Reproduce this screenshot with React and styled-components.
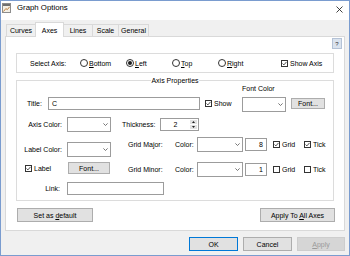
import React from "react";
import styled, { createGlobalStyle } from "styled-components";

const GlobalStyle = createGlobalStyle`
  html, body {
    margin: 0;
    padding: 0;
    background: #ffffff;
  }
  body {
    font-family: "Liberation Sans", Arial, sans-serif;
    font-size: 7px;
    color: #000;
  }
  * {
    box-sizing: border-box;
  }
  u {
    text-underline-offset: 1px;
  }
`;

const Window = styled.div`
  width: 350px;
  height: 256px;
  border: 1px solid #7a9ccf;
  background: #f0f0f0;
  display: flex;
  flex-direction: column;
  overflow: hidden;
`;

const TitleBar = styled.div`
  flex: none;
  height: 19px;
  background: #fff;
  display: flex;
  align-items: flex-start;
  padding: 2px 6px 0 1px;
`;

const TitleIcon = styled.svg`
  flex: none;
  margin-right: 6px;
`;

const TitleText = styled.span`
  font-size: 7.8px;
  line-height: 10px;
`;

const CloseIcon = styled.svg`
  flex: none;
  margin: 3px 0 0 auto;
`;

const TabStrip = styled.div`
  flex: none;
  height: 16px;
  margin: 0 4px;
  padding-left: 1px;
  display: flex;
  align-items: flex-end;
  position: relative;
  z-index: 1;
`;

const Tab = styled.div`
  width: ${(p) => p.$w}px;
  height: ${(p) => (p.$active ? 15 : 12)}px;
  margin-bottom: ${(p) => (p.$active ? -1 : 0)}px;
  border: 1px solid #d9d9d9;
  border-bottom: none;
  background: ${(p) => (p.$active ? "#fff" : "#f0f0f0")};
  display: flex;
  align-items: center;
  justify-content: center;
  line-height: 9px;
  position: relative;
  z-index: ${(p) => (p.$active ? 2 : 1)};

  &:not(:first-child) {
    margin-left: -1px;
  }
`;

const Panel = styled.div`
  margin: 0 4px;
  background: #fff;
  border: 1px solid #d9d9d9;
  display: flex;
  flex-direction: column;
  padding-bottom: 8px;
`;

const HelpRow = styled.div`
  display: flex;
  justify-content: flex-end;
  padding-right: 2px;
  margin-top: 1px;
`;

const HelpButton = styled.div`
  width: 10px;
  height: 11px;
  background: #dae3ee;
  border: 1px solid #b4c2d6;
  color: #333;
  font-size: 6px;
  display: flex;
  align-items: center;
  justify-content: center;
`;

const SelectGroup = styled.div`
  margin: 4px 10px 0;
  height: 20px;
  border: 1px solid #dcdcdc;
  display: flex;
  align-items: center;
  padding-left: 13px;
`;

const Group = styled.fieldset`
  margin: 3px 10px 0;
  padding: 0 0 5px;
  border: 1px solid #dcdcdc;
  min-width: 0;
`;

const Legend = styled.legend`
  margin: 0 auto;
  padding: 0;
  line-height: 9px;
  font-size: 7px;
`;

const Row = styled.div`
  display: flex;
  align-items: ${(p) => p.$align || "center"};
  margin-top: ${(p) => (p.$top ?? 5)}px;
`;

const Cell = styled.div`
  flex: none;
  width: ${(p) => (p.$w ? p.$w + "px" : "auto")};
  display: flex;
  align-items: center;
  padding-left: ${(p) => p.$pad || 0}px;
  margin-top: ${(p) => p.$top || 0}px;
  margin-bottom: ${(p) => p.$bottom || 0}px;
`;

const Label = styled.span`
  flex: none;
  width: ${(p) => (p.$w ? p.$w + "px" : "auto")};
  margin-right: ${(p) => p.$mr || 0}px;
  text-align: ${(p) => (p.$right ? "right" : "left")};
  line-height: 9px;
  white-space: nowrap;
`;

const FontColorBlock = styled.div`
  display: flex;
  flex-direction: column;
`;

const Caption = styled.span`
  line-height: 8px;
  margin-bottom: 4px;
`;

const Inline = styled.div`
  display: flex;
  align-items: flex-start;
  gap: 5px;
`;

const TextBox = styled.div`
  flex: none;
  width: ${(p) => p.$w}px;
  height: 13px;
  border: 1px solid #9c9c9c;
  background: #fff;
  display: flex;
  align-items: center;
  justify-content: ${(p) => (p.$right ? "flex-end" : "flex-start")};
  padding: 0 3px;
  margin-left: ${(p) => p.$ml || 0}px;
  line-height: 9px;
`;

const ComboBox = styled.div`
  flex: none;
  width: ${(p) => p.$w}px;
  height: 15px;
  border: 1px solid #9c9c9c;
  background: #fff;
  display: flex;
  align-items: center;
  justify-content: flex-end;
  padding-right: 2px;
`;

const SpinBox = styled.div`
  flex: none;
  display: flex;
  height: 13px;
  border: 1px solid #9c9c9c;
  background: #fff;
`;

const SpinValue = styled.div`
  width: 29px;
  display: flex;
  align-items: center;
  justify-content: center;
  line-height: 9px;
`;

const SpinButtons = styled.div`
  width: 8px;
  display: flex;
  flex-direction: column;
  gap: 1px;
  padding: 1px 1px 1px 0;
`;

const SpinButton = styled.div`
  flex: 1;
  background: #e3e3e3;
  display: flex;
  align-items: center;
  justify-content: center;
`;

const Option = styled.div`
  flex: none;
  display: flex;
  align-items: center;
  gap: 2px;
  width: ${(p) => (p.$w ? p.$w + "px" : "auto")};
  margin-left: ${(p) => p.$ml || 0}px;
  line-height: 9px;
  white-space: nowrap;
`;

const CheckBox = styled.span`
  flex: none;
  width: 7px;
  height: 7px;
  border: 1px solid #333;
  background: #fff;
  display: flex;
  align-items: center;
  justify-content: center;
`;

const Radio = styled.span`
  flex: none;
  width: 8px;
  height: 8px;
  border-radius: 50%;
  border: 1px solid #333;
  background: #fff;
  display: flex;
  align-items: center;
  justify-content: center;
  margin-right: -1px;

  &::after {
    content: "";
    width: 4px;
    height: 4px;
    border-radius: 50%;
    background: #1e1e1e;
    display: ${(p) => (p.$checked ? "block" : "none")};
  }
`;

const Button = styled.div`
  flex: none;
  width: ${(p) => p.$w}px;
  height: ${(p) => p.$h || 14}px;
  margin-top: ${(p) => p.$top || 0}px;
  border: 1px solid
    ${(p) => (p.$primary ? "#0078d7" : p.$disabled ? "#cdcdcd" : "#adadad")};
  background: ${(p) => (p.$disabled ? "#d6d6d6" : "#e1e1e1")};
  color: ${(p) => (p.$disabled ? "#9a9a9a" : "#000")};
  display: flex;
  align-items: center;
  justify-content: center;
  line-height: 9px;
  white-space: nowrap;
`;

const ButtonRow = styled.div`
  display: flex;
  justify-content: space-between;
  margin-top: 7px;
  padding: 0 9px 0 11px;
`;

const BottomBar = styled.div`
  flex: none;
  display: flex;
  justify-content: flex-end;
  gap: 5px;
  margin-top: 6px;
  padding-right: 4px;
`;

function CheckMark() {
  return (
    <svg width="5" height="5" viewBox="0 0 5 5">
      <polyline
        points="0.5,2.5 1.9,3.9 4.5,0.9"
        fill="none"
        stroke="#222"
        strokeWidth="0.8"
      />
    </svg>
  );
}

function CheckOption({ checked, children, w, ml }) {
  return (
    <Option $w={w} $ml={ml}>
      <CheckBox>{checked && <CheckMark />}</CheckBox>
      <span>{children}</span>
    </Option>
  );
}

function RadioOption({ checked, children }) {
  return (
    <Option $w={46}>
      <Radio $checked={checked} />
      <span>{children}</span>
    </Option>
  );
}

function Combo({ w }) {
  return (
    <ComboBox $w={w}>
      <svg width="5" height="3" viewBox="0 0 5 3">
        <polyline
          points="0.4,0.4 2.5,2.5 4.6,0.4"
          fill="none"
          stroke="#555"
          strokeWidth="0.8"
        />
      </svg>
    </ComboBox>
  );
}

function Spinner({ value }) {
  return (
    <SpinBox>
      <SpinValue>{value}</SpinValue>
      <SpinButtons>
        <SpinButton>
          <svg width="3" height="2" viewBox="0 0 3 2">
            <polygon points="0,2 1.5,0 3,2" fill="#222" />
          </svg>
        </SpinButton>
        <SpinButton>
          <svg width="3" height="2" viewBox="0 0 3 2">
            <polygon points="0,0 1.5,2 3,0" fill="#222" />
          </svg>
        </SpinButton>
      </SpinButtons>
    </SpinBox>
  );
}

function PushButton({ children, ...rest }) {
  // text goes in a span so the spaces around <u> survive the flex box
  return (
    <Button {...rest}>
      <span>{children}</span>
    </Button>
  );
}

function GridRow({ title, value, grid, tick }) {
  return (
    <Cell $pad={6}>
      <Label $w={47}>{title}</Label>
      <Label $w={22}>Color:</Label>
      <Combo w={46} />
      <TextBox $w={22} $ml={2} $right>
        {value}
      </TextBox>
      <CheckOption checked={grid} w={31} ml={6}>
        Grid
      </CheckOption>
      <CheckOption checked={tick}>Tick</CheckOption>
    </Cell>
  );
}

const TABS = [
  { name: "Curves", w: 30 },
  { name: "Axes", w: 29, active: true },
  { name: "Lines", w: 30 },
  { name: "Scale", w: 27 },
  { name: "General", w: 31 },
];

export default function App() {
  return (
    <>
      <GlobalStyle />
      <Window>
        <TitleBar>
          <TitleIcon width="9" height="10" viewBox="0 0 9 10">
            <rect x="0.5" y="0.5" width="8" height="9" fill="#f4f0e6" stroke="#8d8d8d" />
            <rect x="1" y="1" width="7" height="2" fill="#6f6f6f" />
            <polyline
              points="1.5,8.5 3.8,5.6 5.4,6.6 7.6,3.8"
              fill="none"
              stroke="#b8742f"
              strokeWidth="0.9"
            />
          </TitleIcon>
          <TitleText>Graph Options</TitleText>
          <CloseIcon width="7" height="7" viewBox="0 0 7 7">
            <path d="M0.5 0.5 L6.5 6.5 M6.5 0.5 L0.5 6.5" stroke="#111" strokeWidth="0.8" />
          </CloseIcon>
        </TitleBar>

        <TabStrip>
          {TABS.map((t) => (
            <Tab key={t.name} $w={t.w} $active={t.active}>
              {t.name}
            </Tab>
          ))}
        </TabStrip>

        <Panel>
          <HelpRow>
            <HelpButton>?</HelpButton>
          </HelpRow>

          <SelectGroup>
            <Label $w={50}>Select Axis:</Label>
            <RadioOption>
              <u>B</u>ottom
            </RadioOption>
            <RadioOption checked>
              <u>L</u>eft
            </RadioOption>
            <RadioOption>
              <u>T</u>op
            </RadioOption>
            <RadioOption>
              <u>R</u>ight
            </RadioOption>
            <CheckOption checked ml={17}>
              Show Axis
            </CheckOption>
          </SelectGroup>

          <Group>
            <Legend>Axis Properties</Legend>

            <Row $top={0} $align="flex-end">
              <Cell $w={225} $pad={10} $bottom={2}>
                <Label $w={21}>Title:</Label>
                <TextBox $w={152}>C</TextBox>
                <CheckOption checked ml={5}>
                  Show
                </CheckOption>
              </Cell>
              <FontColorBlock>
                <Caption>Font Color</Caption>
                <Inline>
                  <Combo w={44} />
                  <PushButton $w={34} $h={11} $top={1}>
                    Font...
                  </PushButton>
                </Inline>
              </FontColorBlock>
            </Row>

            <Row>
              <Cell $w={105}>
                <Label $w={45} $mr={5} $right>
                  Axis Color:
                </Label>
                <Combo w={44} />
              </Cell>
              <Cell>
                <Label $w={38}>Thickness:</Label>
                <Spinner value="2" />
              </Cell>
            </Row>

            <Row $align="flex-start">
              <Cell $w={105} $top={5}>
                <Label $w={45} $mr={5} $right>
                  Label Color:
                </Label>
                <Combo w={44} />
              </Cell>
              <GridRow title="Grid Major:" value="8" grid tick />
            </Row>

            <Row $align="flex-start">
              <Cell $w={105} $pad={8}>
                <CheckOption checked w={43}>
                  Label
                </CheckOption>
                <PushButton $w={42} $h={12}>
                  Font...
                </PushButton>
              </Cell>
              <GridRow title="Grid Minor:" value="1" />
            </Row>

            <Row>
              <Cell>
                <Label $w={43} $mr={7} $right>
                  Link:
                </Label>
                <TextBox $w={97} />
              </Cell>
            </Row>
          </Group>

          <ButtonRow>
            <PushButton $w={76}>
              Set as <u>d</u>efault
            </PushButton>
            <PushButton $w={75}>
              Apply To <u>A</u>ll Axes
            </PushButton>
          </ButtonRow>
        </Panel>

        <BottomBar>
          <PushButton $w={49} $primary>
            OK
          </PushButton>
          <PushButton $w={49}>Cancel</PushButton>
          <PushButton $w={48} $disabled>
            <u>A</u>pply
          </PushButton>
        </BottomBar>
      </Window>
    </>
  );
}
